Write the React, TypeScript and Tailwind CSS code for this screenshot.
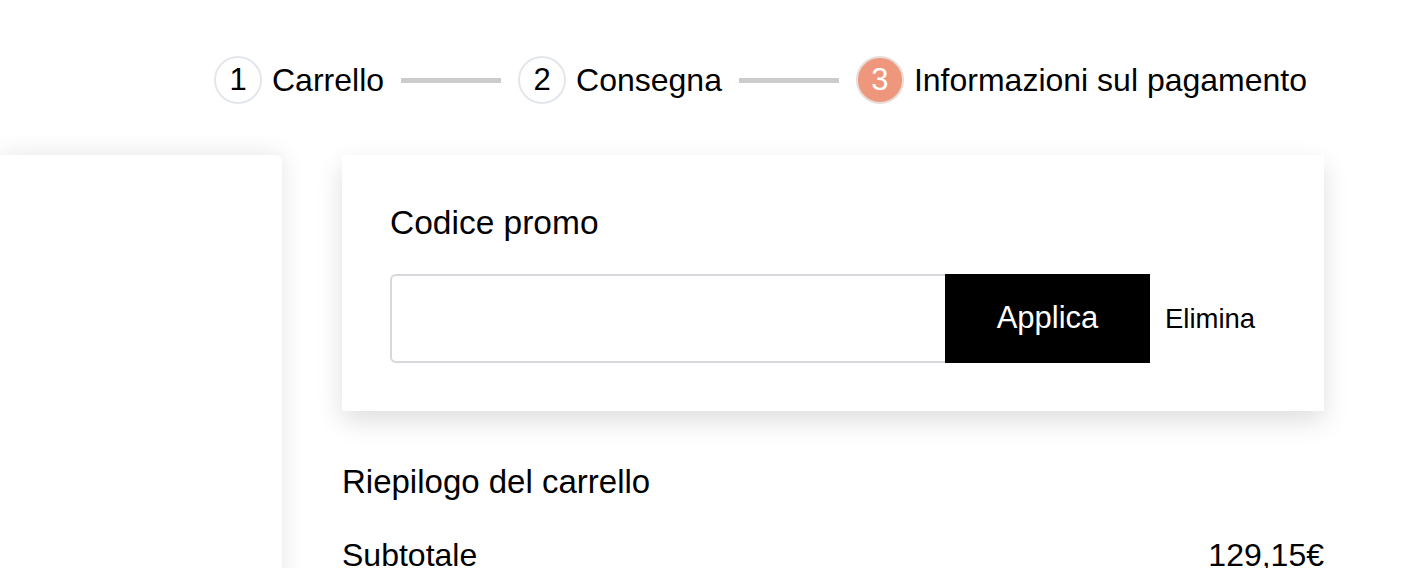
import React from 'react';

const STEPS = [
  { n: 1, label: 'Carrello', active: false },
  { n: 2, label: 'Consegna', active: false },
  { n: 3, label: 'Informazioni sul pagamento', active: true },
];

function Stepper() {
  return (
    <div className="flex items-center pl-[214px] pt-[56px]">
      {STEPS.map((s, i) => (
        <React.Fragment key={s.n}>
          {i > 0 && <div className="mx-[17px] h-[5px] w-[100px] bg-[#cccccc]" />}
          <div className="flex items-center">
            <span
              className={
                s.active
                  ? 'flex h-[48px] w-[48px] items-center justify-center rounded-full border-2 border-[#e6dcd8] bg-[#ef977c] text-[31px] text-white'
                  : 'flex h-[48px] w-[48px] items-center justify-center rounded-full border-2 border-[#e3e6ea] bg-white text-[31px] text-black'
              }
            >
              {s.n}
            </span>
            <span className="ml-[10px] text-[32px] leading-[48px] text-black">{s.label}</span>
          </div>
        </React.Fragment>
      ))}
    </div>
  );
}

function PromoCard() {
  return (
    <div className="bg-white px-[48px] pt-[50px] pb-[48px] shadow-[0_10px_24px_rgba(0,0,0,0.13)]">
      <h2 className="text-[33.5px] leading-[36px] font-normal text-black">Codice promo</h2>
      <div className="mt-[33px] flex items-center">
        <input
          type="text"
          className="h-[89px] w-[555px] rounded-l-[6px] border-2 border-r-0 border-[#d6d8db] bg-white px-4 text-[28px] outline-none"
        />
        <button className="h-[89px] w-[205px] bg-black text-[31px] text-white">Applica</button>
        <button className="ml-[15px] text-[27.5px] text-black">Elimina</button>
      </div>
    </div>
  );
}

export default function App() {
  return (
    <div className="h-[568px] overflow-hidden bg-white font-['Liberation_Sans',Arial,sans-serif]">
      <Stepper />
      <div className="mt-[51px] flex gap-[60px]">
        <aside className="h-[500px] w-[282px] rounded-tr-[6px] bg-white shadow-[0_0_24px_rgba(0,0,0,0.11)]" />
        <main className="w-[982px]">
          <PromoCard />
          <h3 className="mt-[53px] text-[33px] leading-[36px] text-black">Riepilogo del carrello</h3>
          <div className="mt-[37px] flex justify-between text-[32px] leading-[36px] text-black">
            <span>Subtotale</span>
            <span>129,15€</span>
          </div>
        </main>
      </div>
    </div>
  );
}
